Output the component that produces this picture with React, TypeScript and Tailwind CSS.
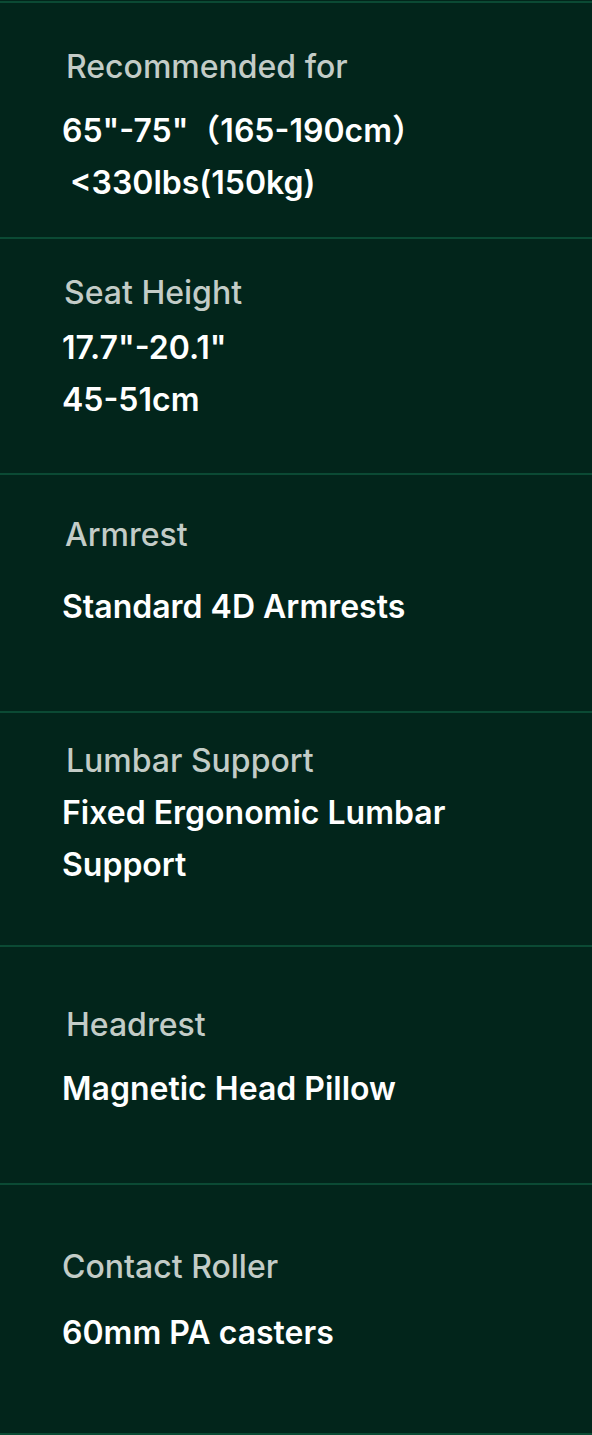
const specs = [
  {
    label: "Recommended for",
    values: ["65\"-75\"（165-190cm）", " <330lbs(150kg)"],
    box: "h-[236px] pt-[46px]",
    labelCls: "pl-[4px]",
    valueCls: "mt-[20px]",
  },
  {
    label: "Seat Height",
    values: ["17.7\"-20.1\"", "45-51cm"],
    box: "h-[236px] pt-[36px]",
    labelCls: "pl-[2px]",
    valueCls: "mt-[11px]",
  },
  {
    label: "Armrest",
    values: ["Standard 4D Armrests"],
    box: "h-[238px] pt-[42px]",
    labelCls: "pl-[3px]",
    valueCls: "mt-[28px]",
  },
  {
    label: "Lumbar Support",
    values: ["Fixed Ergonomic Lumbar", "Support"],
    box: "h-[234px] pt-[30px]",
    labelCls: "pl-[4px]",
    valueCls: "mt-[8px]",
  },
  {
    label: "Headrest",
    values: ["Magnetic Head Pillow"],
    box: "h-[238px] pt-[60px]",
    labelCls: "pl-[4px]",
    valueCls: "mt-[20px]",
  },
  {
    label: "Contact Roller",
    values: ["60mm PA casters"],
    box: "h-[250px] pt-[64px]",
    labelCls: "pl-0",
    valueCls: "mt-[22px]",
  },
];

export default function App() {
  return (
    <div className="min-h-screen bg-[#02251b] pt-px font-['Inter','Noto_Sans_CJK_SC',sans-serif]">
      <div className="border-t-2 border-[#0b4a34]">
        {specs.map((s) => (
          <div key={s.label} className={`${s.box} border-b-2 border-[#0b4a34] pl-[62px]`}>
            <div className={`${s.labelCls} text-[32px] leading-[36px] font-medium text-[#c3ccc7]`}>
              {s.label}
            </div>
            <div className={`${s.valueCls} text-[32px] leading-[52px] font-semibold text-white`}>
              {s.values.map((v) => (
                <div key={v} className="whitespace-pre">
                  {v}
                </div>
              ))}
            </div>
          </div>
        ))}
      </div>
    </div>
  );
}
